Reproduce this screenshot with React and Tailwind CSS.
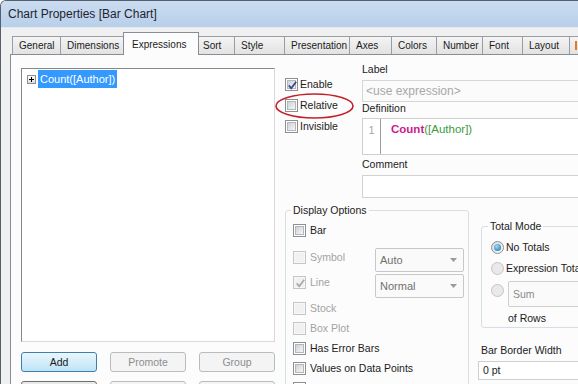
import React from "react";

const tabs = [
  { t: "General", w: "w-[49px]" },
  { t: "Dimensions", w: "w-[66px]" },
  { t: "Expressions", w: "w-[76px]", sel: true },
  { t: "Sort", w: "w-[39px]" },
  { t: "Style", w: "w-[51px]" },
  { t: "Presentation", w: "w-[66px]" },
  { t: "Axes", w: "w-[43px]" },
  { t: "Colors", w: "w-[46px]" },
  { t: "Number", w: "w-[47px]" },
  { t: "Font", w: "w-[41px]" },
  { t: "Layout", w: "w-[48px]" },
  { t: "", w: "w-[30px]", last: true },
];

const Check = ({ checked, disabled }) => (
  <span
    className={`relative flex items-center justify-center w-[13px] h-[13px] shrink-0 border ${
      disabled ? "border-[#c6c6c6] bg-[#f7f7f7]" : "border-[#8e8f8f] bg-white"
    }`}
  >
    <span
      className={`w-[9px] h-[9px] ${
        disabled
          ? "bg-[#f1f1f1]"
          : "border border-[#b3b7bc] bg-linear-to-br from-[#cdd1d6] to-[#f6f6f6]"
      }`}
    />
    {checked && (
      <svg className="absolute inset-0" width="13" height="13" viewBox="0 0 13 13">
        <path
          d="M2.8 6.4 L5.2 9.3 L10.2 2.8"
          fill="none"
          stroke={disabled ? "#a9a9a9" : "#33478a"}
          strokeWidth="1.7"
        />
      </svg>
    )}
  </span>
);

const Radio = ({ on, disabled, className = "" }) => (
  <span
    className={`flex items-center justify-center w-[13px] h-[13px] shrink-0 rounded-full border ${
      disabled
        ? "border-[#c4c4c4] bg-[#e9e9e9]"
        : "border-[#8e8f8f] bg-linear-to-br from-[#d5dae0] to-[#f8f8f8]"
    } ${className}`}
  >
    {on && (
      <span className="w-[7px] h-[7px] rounded-full bg-[radial-gradient(circle_at_40%_35%,#9adcf7,#1b6aa3)]" />
    )}
  </span>
);

const Combo = ({ text, className = "" }) => (
  <div
    className={`flex items-center justify-between pl-[4px] pr-[6px] border border-[#c8c8c8] rounded-[2px] bg-[#fafafa] text-[11px] text-[#707070] ${className}`}
  >
    <span>{text}</span>
    <svg width="7" height="4" viewBox="0 0 7 4">
      <path d="M0 0 H7 L3.5 4 Z" fill="#9a9a9a" />
    </svg>
  </div>
);

const Opt = ({ label, checked, disabled, className = "" }) => (
  <div className={`flex items-center gap-[4px] h-[20px] ${className}`}>
    <Check checked={checked} disabled={disabled} />
    <span className={disabled ? "text-[#a3a3a3]" : ""}>{label}</span>
  </div>
);

export default function App() {
  return (
    <div className="relative w-[578px] h-[384px] overflow-hidden flex flex-col bg-[#f0f0f0] border-l border-t border-[#56606c] rounded-tl-[6px] font-['Liberation_Sans',Arial,sans-serif] text-[10.5px] leading-[13px] text-[#1b1b1b]">
      {/* title bar */}
      <div className="h-[27px] shrink-0 flex items-center pl-[7px] bg-linear-to-b from-[#cadcf1] to-[#b9cfe9] border-b border-[#dfe8f3] text-[12px] text-[#1e2530]">
        Chart Properties [Bar Chart]
      </div>

      {/* tab strip */}
      <div className="h-[26px] shrink-0 flex items-end pl-[11px] text-[10px]">
        {tabs.map((tab, i) =>
          tab.sel ? (
            <div
              key={i}
              className={`relative z-10 ${tab.w} h-[23px] shrink-0 -mb-px -ml-[3px] -mr-[2px] flex items-start pt-[5px] pl-[8px] bg-[#fcfcfc] border-t border-l border-r border-[#898c95]`}
            >
              {tab.t}
            </div>
          ) : (
            <div
              key={i}
              className={`${tab.w} h-[18px] shrink-0 ${i === 0 ? "" : "-ml-px"} flex items-center pl-[6px] bg-linear-to-b from-[#f4f4f4] to-[#e2e2e2] border-t border-l border-r border-[#9a9ca3]`}
            >
              {tab.last ? <span className="ml-[-1px] w-[2px] h-[9px] bg-[#e07b2a]" /> : tab.t}
            </div>
          )
        )}
      </div>

      {/* tab page */}
      <div className="flex-1 flex ml-[9px] bg-[#fcfcfc] border-l border-t border-[#898c95]">
        {/* left column */}
        <div className="ml-[10px] w-[254px] shrink-0 pt-[13px] flex flex-col">
          <div className="h-[274px] bg-white border border-[#d9d9d9] border-t-[#828790] border-l-[#828790] pl-[5px] pt-[1px]">
            <div className="flex items-center h-[18px]">
              <span className="flex items-center justify-center w-[9px] h-[9px] border border-[#8f8f8f] bg-linear-to-b from-white to-[#dcdcdc]">
                <svg width="7" height="7" viewBox="0 0 7 7">
                  <path d="M1 3.5 H6 M3.5 1 V6" stroke="#000" strokeWidth="1" />
                </svg>
              </span>
              <span className="ml-[2px] h-[18px] flex items-center px-[2px] bg-[#3399ff] text-white text-[11px]">
                Count([Author])
              </span>
            </div>
          </div>
          <div className="mt-[10px] flex justify-between">
            <div className="w-[76px] h-[20px] flex items-center justify-center rounded-[3px] border border-[#3c7fb1] bg-linear-to-b from-[#eaf6fd] to-[#bfe3f7]">
              Add
            </div>
            <div className="w-[76px] h-[20px] flex items-center justify-center rounded-[3px] border border-[#b9bcbf] bg-[#f4f4f4] text-[#8d8d8d]">
              Promote
            </div>
            <div className="w-[76px] h-[20px] flex items-center justify-center rounded-[3px] border border-[#b9bcbf] bg-[#f4f4f4] text-[#8d8d8d]">
              Group
            </div>
          </div>
          <div className="mt-[9px] flex justify-between">
            <div className="w-[76px] h-[20px] rounded-[3px] border border-[#707070] bg-[#e9e9e9]" />
            <div className="w-[76px] h-[20px] rounded-[3px] border border-[#b9bcbf] bg-[#f4f4f4]" />
            <div className="w-[76px] h-[20px] rounded-[3px] border border-[#b9bcbf] bg-[#f4f4f4]" />
          </div>
        </div>

        {/* right area */}
        <div className="w-[303px] shrink-0 flex flex-col">
          <div className="flex">
            <div className="w-[87px] shrink-0 pl-[10px] pt-[23px] flex flex-col gap-[8px]">
              <div className="flex items-center gap-[2px] h-[13px]">
                <Check checked />
                <span>Enable</span>
              </div>
              <div className="flex items-center gap-[2px] h-[13px]">
                <Check />
                <span>Relative</span>
              </div>
              <div className="flex items-center gap-[2px] h-[13px]">
                <Check />
                <span>Invisible</span>
              </div>
            </div>
            <div className="w-[240px] shrink-0 pt-[8px] flex flex-col">
              <div>Label</div>
              <div className="mt-[4px] h-[22px] flex items-center pl-[3px] bg-[#fbfbfb] border border-[#d6d6d6] text-[12px] text-[#a8a8a8]">
                &lt;use expression&gt;
              </div>
              <div className="h-[13px]">Definition</div>
              <div className="mt-[3px] h-[37px] flex bg-white border border-[#cfcfcf]">
                <div className="w-[18px] shrink-0 pt-[5px] text-center border-r border-[#9c9c9c] text-[11px] text-[#a6a6a6]">
                  1
                </div>
                <div className="pl-[10px] pt-[4px] text-[11.5px]">
                  <span className="font-bold text-[#cc1a8e]">Count</span>
                  <span className="text-[#3c9a3c]">([Author])</span>
                </div>
              </div>
              <div className="mt-[3px] h-[13px]">Comment</div>
              <div className="mt-[4px] h-[23px] bg-white border border-[#d2d2d2]" />
            </div>
          </div>

          {/* bottom section */}
          <div className="flex items-start">
            <fieldset className="mt-[6px] ml-[10px] w-[184px] h-[200px] shrink-0 border border-[#d5dfe5] rounded-[3px]">
              <legend className="ml-[5px] px-[2px]">Display Options</legend>
              <div className="pl-[7px] pt-[3px]">
                <Opt label="Bar" />
                <div className="flex items-start mt-[7px]">
                  <Opt label="Symbol" disabled className="w-[82px]" />
                  <Combo text="Auto" className="mt-[1px] w-[89px] h-[24px]" />
                </div>
                <div className="flex items-start">
                  <Opt label="Line" checked disabled className="w-[82px]" />
                  <Combo text="Normal" className="mt-[2px] w-[89px] h-[24px]" />
                </div>
                <Opt label="Stock" disabled />
                <Opt label="Box Plot" disabled />
                <Opt label="Has Error Bars" />
                <Opt label="Values on Data Points" />
                <Opt label="Text on Axis" />
              </div>
            </fieldset>

            <div className="ml-[12px] w-[120px] shrink-0 flex flex-col">
              <fieldset className="mt-[22px] border border-[#d5dfe5] rounded-[3px]">
                <legend className="ml-[6px] px-[2px]">Total Mode</legend>
                <div className="pl-[9px] pb-[2px]">
                  <div className="mt-[6px] h-[16px] flex items-center gap-[2px]">
                    <Radio on />
                    <span>No Totals</span>
                  </div>
                  <div className="mt-[5px] h-[16px] flex items-center gap-[2px] whitespace-nowrap">
                    <Radio disabled />
                    <span>Expression Total</span>
                  </div>
                  <div className="mt-[5px] flex items-start">
                    <Radio disabled className="mt-[3px]" />
                    <div className="ml-[4px] w-[100px] h-[26px] flex items-center pl-[4px] border border-[#cfcfcf] rounded-[2px] bg-[#fafafa] text-[#8a8a8a]">
                      Sum
                    </div>
                  </div>
                  <div className="mt-[5px] pl-[17px]">of Rows</div>
                </div>
              </fieldset>
              <div className="mt-[16px] whitespace-nowrap">Bar Border Width</div>
              <div className="mt-[4px] -ml-[3px] w-[110px] h-[19px] flex items-center pl-[4px] bg-white border border-[#cfcfcf]">
                0 pt
              </div>
            </div>
          </div>
        </div>
      </div>

      {/* annotation around Relative */}
      <svg className="absolute left-[273px] top-[90px]" width="82" height="30" viewBox="0 0 82 30">
        <ellipse cx="40.5" cy="15" rx="38.5" ry="12" fill="none" stroke="#c4202b" strokeWidth="1.6" />
      </svg>
    </div>
  );
}
